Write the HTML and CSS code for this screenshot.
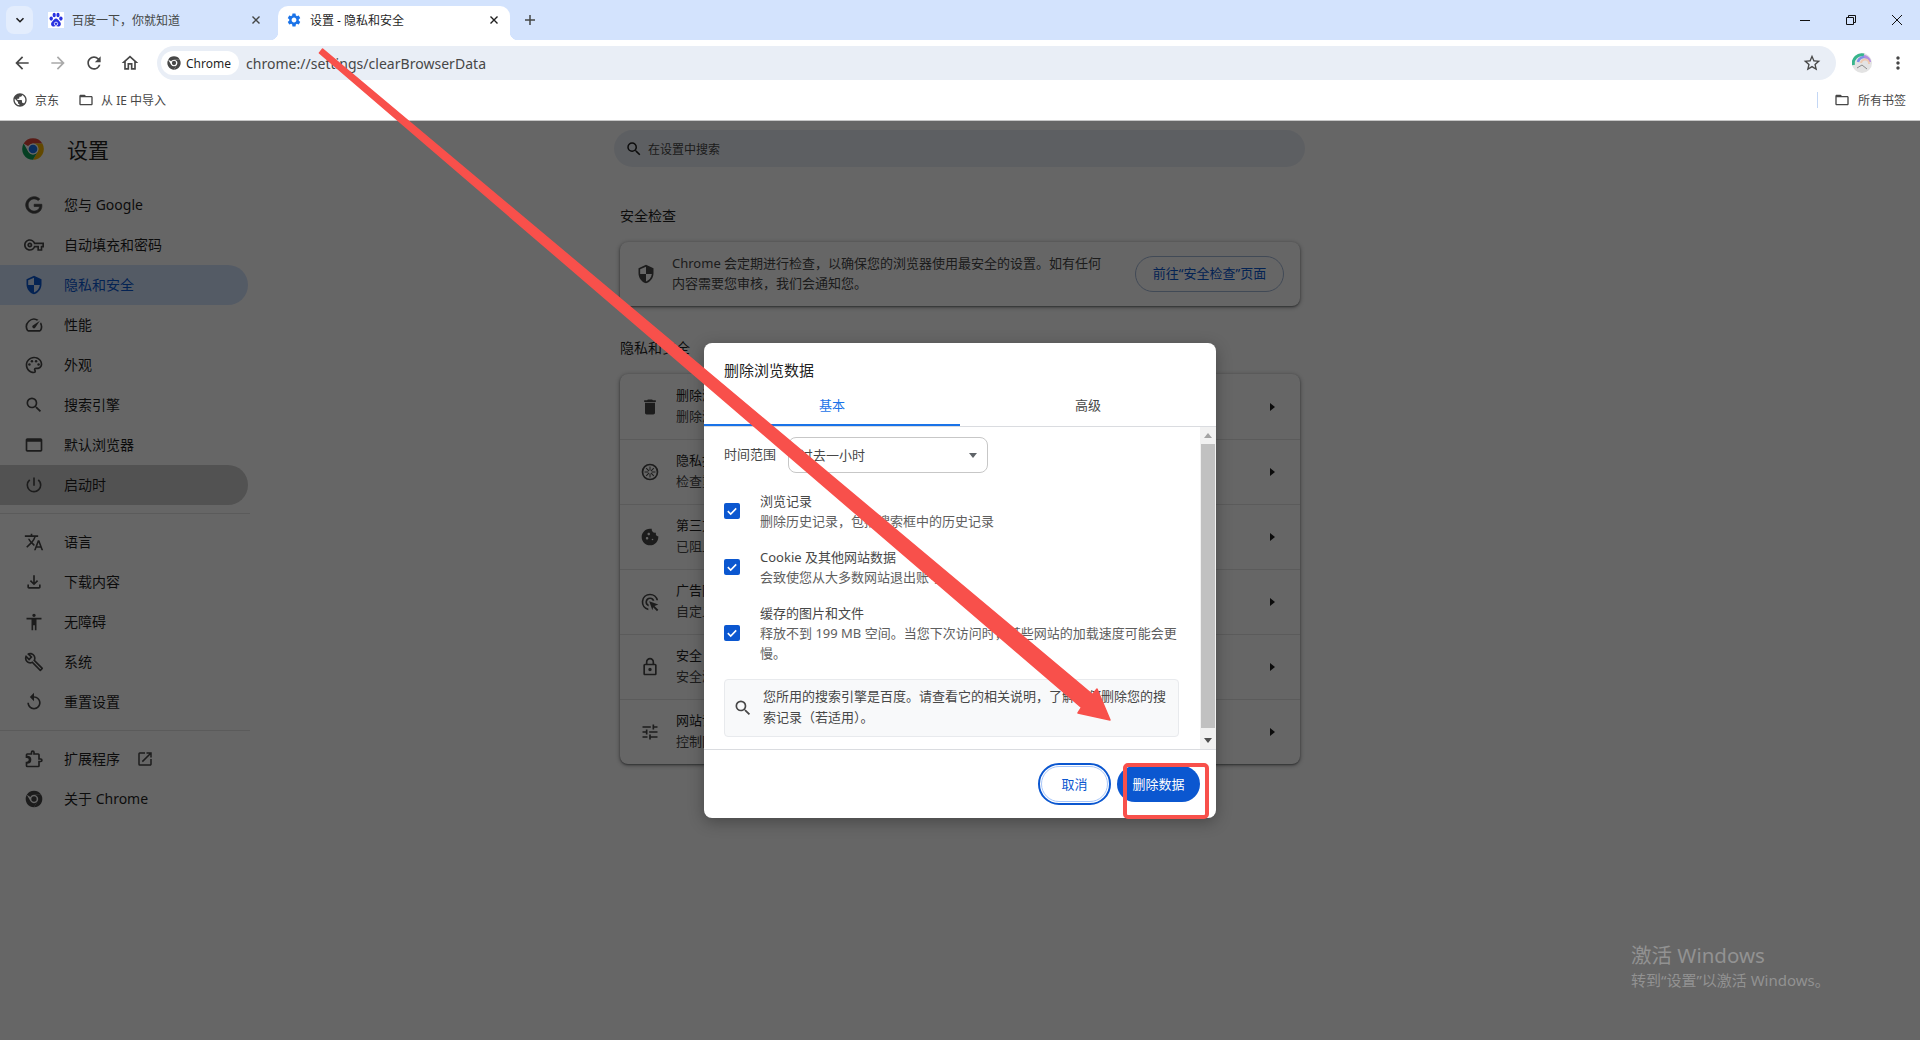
FILE: index.html
```html
<!DOCTYPE html>
<html lang="zh-CN">
<head>
  <meta charset="UTF-8">
  <title>设置 - 隐私和安全</title>
  <link rel="stylesheet" href="styles.css">
</head>
<body>

  <!-- icon set -->
  <svg class="sprite" xmlns="http://www.w3.org/2000/svg">
    <symbol id="i-back" viewBox="0 0 24 24"><path d="M20 11H7.83l5.59-5.59L12 4l-8 8 8 8 1.41-1.41L7.83 13H20v-2z"/></symbol>
    <symbol id="i-forward" viewBox="0 0 24 24"><path d="M12 4l-1.41 1.41L16.17 11H4v2h12.17l-5.58 5.59L12 20l8-8z"/></symbol>
    <symbol id="i-reload" viewBox="0 0 24 24"><path d="M17.65 6.35A7.958 7.958 0 0 0 12 4c-4.42 0-7.99 3.58-7.99 8s3.57 8 7.99 8c3.73 0 6.84-2.55 7.73-6h-2.08A5.99 5.99 0 0 1 12 18c-3.31 0-6-2.69-6-6s2.69-6 6-6c1.66 0 3.14.69 4.22 1.78L13 11h7V4l-2.35 2.35z"/></symbol>
    <symbol id="i-home" viewBox="0 0 24 24"><path d="M12 5.69l5 4.5V18h-2v-6H9v6H7v-7.81l5-4.5M12 3L2 12h3v8h6v-6h2v6h6v-8h3L12 3z"/></symbol>
    <symbol id="i-star" viewBox="0 0 24 24"><path d="M22 9.24l-7.19-.62L12 2 9.19 8.63 2 9.24l5.46 4.73L5.82 21 12 17.27 18.18 21l-1.63-7.03L22 9.24zM12 15.4l-3.76 2.27 1-4.28-3.32-2.88 4.38-.38L12 6.1l1.71 4.04 4.38.38-3.32 2.88 1 4.28L12 15.4z"/></symbol>
    <symbol id="i-more" viewBox="0 0 24 24"><path d="M12 8c1.1 0 2-.9 2-2s-.9-2-2-2-2 .9-2 2 .9 2 2 2zm0 2c-1.1 0-2 .9-2 2s.9 2 2 2 2-.9 2-2-.9-2-2-2zm0 6c-1.1 0-2 .9-2 2s.9 2 2 2 2-.9 2-2-.9-2-2-2z"/></symbol>
    <symbol id="i-folder" viewBox="0 0 24 24"><path d="M20 6h-8l-2-2H4c-1.1 0-1.99.9-1.99 2L2 18c0 1.1.9 2 2 2h16c1.1 0 2-.9 2-2V8c0-1.1-.9-2-2-2zm0 12H4V8h16v10z"/></symbol>
    <symbol id="i-globe" viewBox="0 0 24 24"><path d="M12 2C6.48 2 2 6.48 2 12s4.48 10 10 10 10-4.48 10-10S17.52 2 12 2zm-1 17.93c-3.95-.49-7-3.85-7-7.93 0-.62.08-1.21.21-1.79L9 15v1c0 1.1.9 2 2 2v1.93zm6.9-2.54c-.26-.81-1-1.39-1.9-1.39h-1v-3c0-.55-.45-1-1-1H8v-2h2c.55 0 1-.45 1-1V7h2c1.1 0 2-.9 2-2v-.41c2.93 1.19 5 4.06 5 7.41 0 2.08-.8 3.97-2.1 5.39z"/></symbol>
    <symbol id="i-gear" viewBox="0 0 24 24"><path d="M19.14 12.94c.04-.3.06-.61.06-.94 0-.32-.02-.64-.07-.94l2.03-1.58a.49.49 0 0 0 .12-.61l-1.92-3.32a.488.488 0 0 0-.59-.22l-2.39.96c-.5-.38-1.03-.7-1.62-.94l-.36-2.54a.484.484 0 0 0-.48-.41h-3.84c-.24 0-.43.17-.47.41l-.36 2.54c-.59.24-1.13.57-1.62.94l-2.39-.96c-.22-.08-.47 0-.59.22L2.74 8.87c-.12.21-.08.47.12.61l2.03 1.58c-.05.3-.09.63-.09.94s.02.64.07.94l-2.03 1.58a.49.49 0 0 0-.12.61l1.92 3.32c.12.22.37.29.59.22l2.39-.96c.5.38 1.03.7 1.62.94l.36 2.54c.05.24.24.41.48.41h3.84c.24 0 .44-.17.47-.41l.36-2.54c.59-.24 1.13-.56 1.62-.94l2.39.96c.22.08.47 0 .59-.22l1.92-3.32c.12-.22.07-.47-.12-.61l-2.01-1.58zM12 15.6c-1.98 0-3.6-1.62-3.6-3.6s1.62-3.6 3.6-3.6 3.6 1.62 3.6 3.6-1.62 3.6-3.6 3.6z"/></symbol>
    <symbol id="i-search" viewBox="0 0 24 24"><path d="M15.5 14h-.79l-.28-.27A6.471 6.471 0 0 0 16 9.5 6.5 6.5 0 1 0 9.5 16c1.61 0 3.09-.59 4.23-1.57l.27.28v.79l5 4.99L20.49 19l-4.99-5zm-6 0C7.01 14 5 11.99 5 9.5S7.01 5 9.5 5 14 7.01 14 9.5 11.99 14 9.5 14z"/></symbol>
    <symbol id="i-google" viewBox="0 0 24 24"><path d="M21.35 11.1h-9.17v2.73h6.51c-.33 3.81-3.5 5.44-6.5 5.44C8.36 19.27 5 16.25 5 12c0-4.1 3.2-7.27 7.2-7.27 3.09 0 4.9 1.97 4.9 1.97L19 4.72S16.56 2 12.1 2C6.42 2 2.03 6.8 2.03 12c0 5.05 4.13 10 10.22 10 5.35 0 9.25-3.67 9.25-9.09 0-1.15-.15-1.81-.15-1.81z" stroke="currentColor" stroke-width=".8"/></symbol>
    <symbol id="i-key" viewBox="0 0 24 24"><path d="M22 19h-6v-4h-2.68c-1.14 2.42-3.6 4-6.32 4-3.86 0-7-3.14-7-7s3.14-7 7-7c2.72 0 5.17 1.58 6.32 4H24v6h-2v4zm-4-2h2v-4h2v-2H11.94l-.23-.67C11.01 8.34 9.11 7 7 7c-2.76 0-5 2.24-5 5s2.24 5 5 5c2.11 0 4.01-1.34 4.71-3.33l.23-.67H18v4zM7 15c-1.65 0-3-1.35-3-3s1.35-3 3-3 3 1.35 3 3-1.35 3-3 3zm0-4c-.55 0-1 .45-1 1s.45 1 1 1 1-.45 1-1-.45-1-1-1z"/></symbol>
    <symbol id="i-shield" viewBox="0 0 24 24"><path d="M12 1L3 5v6c0 5.55 3.84 10.74 9 12 5.16-1.26 9-6.45 9-12V5l-9-4zm0 11h7c-.53 4.12-3.28 7.79-7 8.94V12H5V6.3l7-3.11V12z"/></symbol>
    <symbol id="i-speed" viewBox="0 0 24 24"><path d="M20.38 8.57l-1.23 1.85a8 8 0 0 1-.22 7.58H5.07A8 8 0 0 1 15.58 6.85l1.85-1.23A10 10 0 0 0 3.35 19a2 2 0 0 0 1.72 1h13.85a2 2 0 0 0 1.74-1 10 10 0 0 0-.27-10.44zm-9.79 6.84a2 2 0 0 0 2.83 0l5.66-8.49-8.49 5.66a2 2 0 0 0 0 2.83z"/></symbol>
    <symbol id="i-palette" viewBox="0 0 24 24"><path d="M12 22C6.49 22 2 17.51 2 12S6.49 2 12 2s10 4.04 10 9c0 3.31-2.69 6-6 6h-1.77c-.28 0-.5.22-.5.5 0 .12.05.23.13.33.41.47.64 1.06.64 1.67A2.5 2.5 0 0 1 12 22zm0-18c-4.41 0-8 3.59-8 8s3.59 8 8 8c.28 0 .5-.22.5-.5a.54.54 0 0 0-.14-.35c-.41-.46-.63-1.05-.63-1.65a2.5 2.5 0 0 1 2.5-2.5H16c2.21 0 4-1.79 4-4 0-3.86-3.59-7-8-7z"/><circle cx="6.5" cy="11.5" r="1.5"/><circle cx="9.5" cy="7.5" r="1.5"/><circle cx="14.5" cy="7.5" r="1.5"/><circle cx="17.5" cy="11.5" r="1.5"/></symbol>
    <symbol id="i-window" viewBox="0 0 24 24"><path d="M20 4H4c-1.1 0-2 .9-2 2v12c0 1.1.9 2 2 2h16c1.1 0 2-.9 2-2V6c0-1.1-.9-2-2-2zm0 14H4V8h16v10z"/></symbol>
    <symbol id="i-power" viewBox="0 0 24 24"><path d="M13 3h-2v10h2V3zm4.83 2.17l-1.42 1.42A6.92 6.92 0 0 1 19 12c0 3.87-3.13 7-7 7A6.995 6.995 0 0 1 7.58 6.58L6.17 5.17A8.932 8.932 0 0 0 3 12a9 9 0 0 0 18 0c0-2.74-1.23-5.18-3.17-6.83z"/></symbol>
    <symbol id="i-translate" viewBox="0 0 24 24"><path d="M12.87 15.07l-2.54-2.51.03-.03A17.52 17.52 0 0 0 14.07 6H17V4h-7V2H8v2H1v1.99h11.17C11.5 7.92 10.44 9.75 9 11.35 8.07 10.32 7.3 9.19 6.69 8h-2c.73 1.63 1.73 3.17 2.98 4.56l-5.09 5.02L4 19l5-5 3.11 3.11.76-2.04zM18.5 10h-2L12 22h2l1.12-3h4.75L21 22h2l-4.5-12zm-2.62 7l1.62-4.33L19.12 17h-3.24z"/></symbol>
    <symbol id="i-download" viewBox="0 0 24 24"><path d="M18 15v3H6v-3H4v3c0 1.1.9 2 2 2h12c1.1 0 2-.9 2-2v-3h-2zm-1-4l-1.41-1.41L13 12.17V4h-2v8.17L8.41 9.59 7 11l5 5 5-5z"/></symbol>
    <symbol id="i-access" viewBox="0 0 24 24"><path d="M12 2c1.1 0 2 .9 2 2s-.9 2-2 2-2-.9-2-2 .9-2 2-2zm9 7h-6v13h-2v-6h-2v6H9V9H3V7h18v2z"/></symbol>
    <symbol id="i-wrench" viewBox="0 0 24 24"><path d="M22.61 18.99l-9.08-9.08c.93-2.34.45-5.1-1.44-7C9.79.61 6.21.4 3.66 2.26L7.5 6.11 6.08 7.52 2.25 3.69C.39 6.23.6 9.82 2.9 12.11c1.86 1.86 4.57 2.35 6.89 1.48l9.11 9.11c.39.39 1.02.39 1.41 0l2.3-2.3c.4-.38.4-1.01 0-1.41zm-3 1.6l-9.46-9.46c-.61.45-1.29.72-2 .82-1.36.2-2.79-.21-3.83-1.25C3.37 9.76 2.93 8.5 3 7.26l3.09 3.09 4.24-4.24-3.09-3.09c1.24-.07 2.49.37 3.44 1.31a4.469 4.469 0 0 1 1.24 3.96 4.35 4.35 0 0 1-.88 1.96l9.45 9.45-.88.89z"/></symbol>
    <symbol id="i-reset" viewBox="0 0 24 24"><path d="M12 5V1L7 6l5 5V7c3.31 0 6 2.69 6 6s-2.69 6-6 6-6-2.69-6-6H4c0 4.42 3.58 8 8 8s8-3.58 8-8-3.58-8-8-8z"/></symbol>
    <symbol id="i-ext" viewBox="0 0 24 24"><path d="M20 11h-1V7a2 2 0 0 0-2-2h-4V4a2.500 2.500 0 0 0-5 0v1H4a2 2 0 0 0-2 2v3.800h1.500a2.200 2.200 0 0 1 0 4.400H2V20a2 2 0 0 0 2 2h13a2 2 0 0 0 2-2v-4h1a2.500 2.500 0 0 0 0-5zm-3 3v6H4v-2.200a4.200 4.200 0 0 0 0-9.600V7h6V4a.5.5 0 0 1 1 0v3h6v6h3a.5.5 0 0 1 0 1z"/></symbol>
    <symbol id="i-open" viewBox="0 0 24 24"><path d="M19 19H5V5h7V3H5a2 2 0 0 0-2 2v14a2 2 0 0 0 2 2h14c1.1 0 2-.9 2-2v-7h-2v7zM14 3v2h3.59l-9.83 9.83 1.41 1.41L19 6.41V10h2V3h-7z"/></symbol>
    <symbol id="i-chrome-mono" viewBox="0 0 24 24"><path d="M12 2a10 10 0 0 1 8.66 5H12a5 5 0 0 0-4.33 2.5L3.34 7A10 10 0 0 1 12 2z"/><path d="M20.66 7A10 10 0 0 1 12 22l4.33-7.5A5 5 0 0 0 12 7z"/><path d="M12 22A10 10 0 0 1 3.34 7l4.33 7.5a5 5 0 0 0 8.66 0z"/><circle cx="12" cy="12" r="3.2"/></symbol>
    <symbol id="i-trash" viewBox="0 0 24 24"><path d="M6 19c0 1.1.9 2 2 2h8c1.1 0 2-.9 2-2V7H6v12zM19 4h-3.5l-1-1h-5l-1 1H5v2h14V4z"/></symbol>
    <symbol id="i-guide" viewBox="0 0 24 24"><path d="M12 2a10 10 0 1 0 0 20 10 10 0 0 0 0-20zm0 18a8 8 0 1 1 0-16 8 8 0 0 1 0 16z"/><path d="M11.4 5.5h1.2v4.6h-1.2zM11.4 13.9h1.2v4.6h-1.2zM5.5 11.4h4.6v1.2H5.5zM13.9 11.4h4.6v1.2h-4.6zM7 7.9l.9-.9 3.2 3.2-.9.9zM12.9 13.8l.9-.9 3.2 3.2-.9.9zM7.9 17l-.9-.9 3.2-3.2.9.9zM13.8 11.1l-.9-.9 3.2-3.2.9.9z"/></symbol>
    <symbol id="i-cookie" viewBox="0 0 24 24"><path d="M21.95 10.99c-1.79-.03-3.7-1.95-2.68-4.22-2.98 1-5.77-1.59-5.19-4.56C6.95.71 2 6.58 2 12c0 5.52 4.48 10 10 10 5.89 0 10.54-5.08 9.95-11.01zM8.5 15c-.83 0-1.5-.67-1.5-1.5S7.67 12 8.5 12s1.5.67 1.5 1.5S9.33 15 8.5 15zm2-5C9.67 10 9 9.33 9 8.5S9.67 7 10.5 7s1.5.67 1.5 1.5-.67 1.5-1.5 1.5zm4.5 6c-.55 0-1-.45-1-1s.45-1 1-1 1 .45 1 1-.45 1-1 1z"/></symbol>
    <symbol id="i-ads" viewBox="0 0 24 24"><path d="M12 2a10 10 0 0 0-2 19.8v-2.05A8 8 0 1 1 19.75 10h2.05A10 10 0 0 0 12 2z"/><path d="M12 6.5a5.5 5.5 0 0 0-1.6 10.76v-2.16A3.5 3.5 0 1 1 15.1 10.4h2.16A5.5 5.5 0 0 0 12 6.5z"/><path d="M11 11l11 4-4.6 1.8L22 21.4 20.4 23l-4.6-4.6L14.9 22z"/></symbol>
    <symbol id="i-lock" viewBox="0 0 24 24"><path d="M18 8h-1V6c0-2.76-2.24-5-5-5S7 3.24 7 6v2H6c-1.1 0-2 .9-2 2v10c0 1.1.9 2 2 2h12c1.1 0 2-.9 2-2V10c0-1.1-.9-2-2-2zM9 6c0-1.66 1.34-3 3-3s3 1.34 3 3v2H9V6zm9 14H6V10h12v10zm-6-3c1.1 0 2-.9 2-2s-.9-2-2-2-2 .9-2 2 .9 2 2 2z"/></symbol>
    <symbol id="i-tune" viewBox="0 0 24 24"><path d="M3 17v2h6v-2H3zM3 5v2h10V5H3zm10 16v-2h8v-2h-8v-2h-2v6h2zM7 9v2H3v2h4v2h2V9H7zm14 4v-2H11v2h10zm-6-4h2V7h4V5h-4V3h-2v6z"/></symbol>
    <symbol id="i-chrome" viewBox="0 0 24 24"><path fill="#db4437" d="M12 2a10 10 0 0 1 8.66 5H12a5 5 0 0 0-4.33 2.5L3.34 7A10 10 0 0 1 12 2z"/><path fill="#f4b400" d="M20.66 7A10 10 0 0 1 12 22l4.33-7.5A5 5 0 0 0 12 7z"/><path fill="#0f9d58" d="M12 22A10 10 0 0 1 3.34 7l4.33 7.5a5 5 0 0 0 8.66 0z"/><circle cx="12" cy="12" r="5" fill="#fff"/><circle cx="12" cy="12" r="4" fill="#1a73e8"/></symbol>
  </svg>

  <!-- tab strip -->
  <div class="tabstrip">
    <button class="tab-search"><svg viewBox="0 0 12 12" width="12" height="12"><path d="M2.5 4.2 6 7.7l3.5-3.5" fill="none" stroke="#1f1f1f" stroke-width="1.6"/></svg></button>
    <div class="tab">
      <svg class="fav" viewBox="0 0 16 16"><rect width="16" height="16" fill="#fff"/><g fill="#2932e1"><ellipse cx="3.2" cy="6.6" rx="1.7" ry="2.1"/><ellipse cx="6.2" cy="3" rx="1.6" ry="2.2"/><ellipse cx="10" cy="3" rx="1.6" ry="2.2"/><ellipse cx="12.9" cy="6.6" rx="1.7" ry="2.1"/><path d="M8 6.6c1.6 0 2.3 1.6 3.4 2.6 1.3 1.2 1.6 2.1 1.4 3.3-.3 1.6-1.6 2.2-3 2-1-.2-1.200-.4-1.800-.4s-.9.3-1.900.4c-1.400.2-2.700-.4-3-2-.2-1.200.2-2.100 1.500-3.300C5.700 8.200 6.400 6.600 8 6.600z"/></g><circle cx="8" cy="11.800" r="1.700" fill="none" stroke="#fff" stroke-width=".8"/></svg>
      <span class="tab-title">百度一下，你就知道</span>
      <svg class="tab-close" viewBox="0 0 10 10"><path d="M1.500 1.500l7 7m0-7l-7 7" stroke="#444746" stroke-width="1.400"/></svg>
    </div>
    <div class="tab tab-active">
      <svg class="fav gear"><use href="#i-gear"/></svg>
      <span class="tab-title">设置 - 隐私和安全</span>
      <svg class="tab-close" viewBox="0 0 10 10"><path d="M1.500 1.500l7 7m0-7l-7 7" stroke="#1f1f1f" stroke-width="1.400"/></svg>
    </div>
    <svg class="tab-new" viewBox="0 0 12 12"><path d="M6 1v10M1 6h10" stroke="#444746" stroke-width="1.500"/></svg>
    <div class="win-controls">
      <svg viewBox="0 0 12 12"><path d="M1 6.500h10" stroke="#111" stroke-width="1"/></svg>
      <svg viewBox="0 0 12 12"><path d="M1.500 3.500h7v7h-7zM3.500 3.500v-2h7v7h-2" fill="none" stroke="#111" stroke-width="1"/></svg>
      <svg viewBox="0 0 12 12"><path d="M1 1l10 10m0-10L1 11" stroke="#111" stroke-width="1"/></svg>
    </div>
  </div>

  <!-- toolbar -->
  <div class="toolbar">
    <svg class="tool"><use href="#i-back"/></svg>
    <svg class="tool tool-off"><use href="#i-forward"/></svg>
    <svg class="tool"><use href="#i-reload"/></svg>
    <svg class="tool"><use href="#i-home"/></svg>
    <div class="omnibox">
      <span class="chip"><svg class="chip-icon"><use href="#i-chrome-mono"/></svg>Chrome</span>
      <span class="url">chrome://settings/clearBrowserData</span>
      <svg class="tool star"><use href="#i-star"/></svg>
    </div>
    <svg class="avatar" viewBox="0 0 20 20">
      <circle cx="10" cy="10" r="10" fill="#e3e3e3"/>
      <path d="M1.500 12A8.500 8.500 0 0 1 12 2" fill="none" stroke="#37b58c" stroke-width="3"/>
      <path d="M6 9a6 6 0 0 1 9-4" fill="none" stroke="#7f8fe8" stroke-width="2.500"/>
      <path d="M12 3a8 8 0 0 1 6 6" fill="none" stroke="#b48ee0" stroke-width="2.500"/>
      <path d="M9 10a4 4 0 0 1 8 1" fill="none" stroke="#efc9b0" stroke-width="2"/>
      <path d="M5 15l5-3 5 4" fill="none" stroke="#8d8d8d" stroke-width="1"/>
    </svg>
    <svg class="tool kebab"><use href="#i-more"/></svg>
  </div>

  <!-- bookmarks bar -->
  <div class="bookmarks">
    <span class="bm"><svg class="bm-icon"><use href="#i-globe"/></svg>京东</span>
    <span class="bm"><svg class="bm-icon"><use href="#i-folder"/></svg>从 IE 中导入</span>
    <span class="bm-sep"></span>
    <span class="bm"><svg class="bm-icon"><use href="#i-folder"/></svg>所有书签</span>
  </div>

  <!-- settings page -->
  <div class="page">
    <div class="sidebar">
      <div class="side-head">
        <svg class="side-logo"><use href="#i-chrome"/></svg>
        <span>设置</span>
      </div>
      <div class="nav-item"><svg><use href="#i-google"/></svg>您与 Google</div>
      <div class="nav-item"><svg><use href="#i-key"/></svg>自动填充和密码</div>
      <div class="nav-item nav-active"><svg><use href="#i-shield"/></svg>隐私和安全</div>
      <div class="nav-item"><svg><use href="#i-speed"/></svg>性能</div>
      <div class="nav-item"><svg><use href="#i-palette"/></svg>外观</div>
      <div class="nav-item"><svg><use href="#i-search"/></svg>搜索引擎</div>
      <div class="nav-item"><svg><use href="#i-window"/></svg>默认浏览器</div>
      <div class="nav-item nav-hover"><svg><use href="#i-power"/></svg>启动时</div>
      <div class="nav-sep"></div>
      <div class="nav-item"><svg><use href="#i-translate"/></svg>语言</div>
      <div class="nav-item"><svg><use href="#i-download"/></svg>下载内容</div>
      <div class="nav-item"><svg><use href="#i-access"/></svg>无障碍</div>
      <div class="nav-item"><svg><use href="#i-wrench"/></svg>系统</div>
      <div class="nav-item"><svg><use href="#i-reset"/></svg>重置设置</div>
      <div class="nav-sep"></div>
      <div class="nav-item"><svg><use href="#i-ext"/></svg>扩展程序<svg class="nav-open"><use href="#i-open"/></svg></div>
      <div class="nav-item"><svg><use href="#i-chrome-mono"/></svg>关于 Chrome</div>
    </div>

    <div class="main">
      <div class="searchbox"><svg><use href="#i-search"/></svg>在设置中搜索</div>
      <h2 class="sec-title">安全检查</h2>
      <div class="card check-card">
        <svg class="row-icon"><use href="#i-shield"/></svg>
        <p class="check-text">Chrome 会定期进行检查，以确保您的浏览器使用最安全的设置。如有任何内容需要您审核，我们会通知您。</p>
        <span class="check-btn">前往“安全检查”页面</span>
      </div>
      <h2 class="sec-title sec-second">隐私和安全</h2>
      <div class="card">
        <div class="row"><svg class="row-icon"><use href="#i-trash"/></svg><div class="row-text"><div>删除浏览数据</div><div>删除浏览记录、Cookie、缓存及其他数据</div></div><span class="row-arrow"></span></div>
        <div class="row"><svg class="row-icon"><use href="#i-guide"/></svg><div class="row-text"><div>隐私指南</div><div>检查重要的隐私和安全控制措施</div></div><span class="row-arrow"></span></div>
        <div class="row"><svg class="row-icon"><use href="#i-cookie"/></svg><div class="row-text"><div>第三方 Cookie</div><div>已阻止无痕模式下的第三方 Cookie</div></div><span class="row-arrow"></span></div>
        <div class="row"><svg class="row-icon"><use href="#i-ads"/></svg><div class="row-text"><div>广告隐私设置</div><div>自定义网站用于向您展示广告的信息</div></div><span class="row-arrow"></span></div>
        <div class="row"><svg class="row-icon"><use href="#i-lock"/></svg><div class="row-text"><div>安全</div><div>安全浏览（防范危险网站）和其他安全设置</div></div><span class="row-arrow"></span></div>
        <div class="row"><svg class="row-icon"><use href="#i-tune"/></svg><div class="row-text"><div>网站设置</div><div>控制网站可以使用和显示什么信息</div></div><span class="row-arrow"></span></div>
      </div>
    </div>

    <!-- dialog over dimmed page -->
    <div class="scrim">
      <div class="dialog">
        <div class="dlg-title">删除浏览数据</div>
        <div class="dlg-tabs">
          <div class="dlg-tab dlg-tab-on">基本</div>
          <div class="dlg-tab">高级</div>
        </div>
        <div class="dlg-body">
          <div class="dlg-scroll">
            <div class="range">
              <span class="range-label">时间范围</span>
              <div class="select">过去一小时<span class="caret"></span></div>
            </div>
            <div class="opt opt-first"><span class="check"><svg viewBox="0 0 16 16"><path d="M3.800 8.200l2.900 2.800 5.500-5.600" fill="none" stroke="#fff" stroke-width="1.600"/></svg></span><div><div class="opt-label">浏览记录</div><div class="opt-sub">删除历史记录，包括搜索框中的历史记录</div></div></div>
            <div class="opt"><span class="check"><svg viewBox="0 0 16 16"><path d="M3.800 8.200l2.900 2.800 5.500-5.600" fill="none" stroke="#fff" stroke-width="1.600"/></svg></span><div><div class="opt-label">Cookie 及其他网站数据</div><div class="opt-sub">会致使您从大多数网站退出账号。</div></div></div>
            <div class="opt"><span class="check"><svg viewBox="0 0 16 16"><path d="M3.800 8.200l2.900 2.800 5.500-5.600" fill="none" stroke="#fff" stroke-width="1.600"/></svg></span><div><div class="opt-label">缓存的图片和文件</div><div class="opt-sub">释放不到 199 MB 空间。当您下次访问时，某些网站的加载速度可能会更慢。</div></div></div>
            <div class="notice"><svg><use href="#i-search"/></svg><p>您所用的搜索引擎是百度。请查看它的相关说明，了解如何删除您的搜索记录（若适用）。</p></div>
          </div>
          <div class="scrollbar">
            <span class="sb-up"></span>
            <span class="sb-thumb"></span>
            <span class="sb-down"></span>
          </div>
        </div>
        <div class="dlg-foot">
          <button class="btn btn-cancel">取消</button>
          <button class="btn btn-delete">删除数据</button>
        </div>
      </div>
    </div>
  </div>

  <!-- windows watermark -->
  <div class="watermark">
    <div class="wm-big">激活 Windows</div>
    <div>转到“设置”以激活 Windows。</div>
  </div>

  <!-- red annotation drawn on top of the screenshot -->
  <svg class="annot" viewBox="0 0 1920 1040">
    <polygon points="322.600,49.100 1092.500,694.500 1097,689 1110,720 1078,713 1081.500,707.500 319.400,52.900" fill="#f8504b" stroke="#f8504b" stroke-width="1.500" stroke-linejoin="round"/>
    <rect x="1125" y="765" width="82" height="52" rx="3" fill="none" stroke="#f8504b" stroke-width="4"/>
  </svg>

</body>
</html>
```

FILE: styles.css
```css
* {
  box-sizing: border-box;
}
html, body {
  height: 100%;
}
body {
  margin: 0;
  position: relative;
  display: flex;
  flex-direction: column;
  height: 1040px;
  overflow: hidden;
  background: #fff;
  color: #1f1f1f;
  font-family: "Noto Sans", "Noto Sans CJK SC", sans-serif;
  font-size: 13px;
}
svg {
  fill: currentColor;
  flex: none;
}
.sprite {
  display: none;
}

/* tab strip */
.tabstrip {
  display: flex;
  align-items: flex-end;
  height: 40px;
  flex: none;
  background: #d3e3fd;
  padding-left: 6px;
}
.tab-search {
  align-self: flex-start;
  margin: 6px 7px 0 0;
  width: 27px;
  height: 28px;
  padding: 0;
  border: 0;
  border-radius: 8px;
  background: #e3edfd;
  display: flex;
  align-items: center;
  justify-content: center;
}
.tab {
  position: relative;
  display: flex;
  align-items: center;
  width: 232px;
  height: 34px;
  padding: 0 11px 7px 8px;
  margin-right: 6px;
  font-size: 12px;
  color: #444746;
}
.tab-active {
  background: #fff;
  border-radius: 10px 10px 0 0;
  color: #1f1f1f;
}
.tab-active::before, .tab-active::after {
  content: "";
  position: absolute;
  bottom: 0;
  width: 8px;
  height: 8px;
}
.tab-active::before {
  left: -8px;
  background: radial-gradient(circle at 0 0, transparent 8px, #fff 8.500px);
}
.tab-active::after {
  right: -8px;
  background: radial-gradient(circle at 100% 0, transparent 8px, #fff 8.500px);
}
.fav {
  width: 16px;
  height: 16px;
  margin-right: 8px;
}
.gear {
  color: #1a73e8;
}
.tab-title {
  flex: 1;
  white-space: nowrap;
}
.tab-close {
  width: 10px;
  height: 10px;
}
.tab-new {
  width: 12px;
  height: 12px;
  margin: 0 0 14px 8px;
}
.win-controls {
  margin-left: auto;
  align-self: flex-start;
  display: flex;
  gap: 34px;
  padding: 14px 17px 0 0;
}
.win-controls svg {
  width: 12px;
  height: 12px;
}

/* toolbar */
.toolbar {
  display: flex;
  align-items: center;
  height: 40px;
  flex: none;
  background: #fff;
  border-radius: 8px 8px 0 0;
  padding: 6px 0 0 12px;
  gap: 16px;
}
.tool {
  width: 20px;
  height: 20px;
  color: #474747;
}
.tool-off {
  color: #a9a9a9;
}
.omnibox {
  display: flex;
  align-items: center;
  height: 34px;
  width: 1679px;
  margin-left: 1px;
  padding: 0 14px 0 4px;
  background: #e9eef6;
  border-radius: 17px;
}
.chip {
  display: flex;
  align-items: center;
  height: 24px;
  padding: 0 8px 0 5px;
  background: #fff;
  border-radius: 12px;
  font-size: 12px;
  color: #1f1f1f;
}
.chip-icon {
  width: 16px;
  height: 16px;
  margin-right: 4px;
  color: #474747;
}
.url {
  flex: 1;
  margin-left: 7px;
  font-size: 14px;
  letter-spacing: .03px;
  color: #474747;
}
.avatar {
  width: 20px;
  height: 20px;
}

/* bookmarks */
.bookmarks {
  display: flex;
  align-items: center;
  height: 41px;
  flex: none;
  padding: 0 14px 1px 12px;
  background: #fff;
  border-bottom: 1px solid #c7c7c7;
  font-size: 12px;
  color: #474747;
}
.bm {
  display: flex;
  align-items: center;
  margin-right: 19px;
}
.bm:last-child {
  margin-right: 0;
}
.bm-icon {
  width: 16px;
  height: 16px;
  margin-right: 7px;
}
.bm:last-child .bm-icon {
  margin-right: 8px;
}
.bm-sep {
  width: 1px;
  height: 16px;
  margin: 0 16px 0 auto;
  background: #c4d7f5;
}

/* settings page */
.page {
  position: relative;
  flex: 1;
  display: flex;
  min-height: 0;
}
.sidebar {
  width: 250px;
  flex: none;
}
.side-head {
  display: flex;
  align-items: center;
  height: 64px;
  padding: 0 0 8px 20px;
  font-size: 21px;
}
.side-logo {
  width: 26px;
  height: 26px;
  margin-right: 21px;
}
.nav-item {
  display: flex;
  align-items: center;
  width: 248px;
  height: 40px;
  padding: 0 0 2px 24px;
  border-radius: 0 20px 20px 0;
  font-size: 14px;
}
.nav-item svg {
  width: 20px;
  height: 20px;
  margin: 2px 20px 0 0;
  color: #474747;
}
.nav-item svg.nav-open {
  width: 18px;
  height: 18px;
  margin: 2px 0 0 16px;
}
.nav-active {
  background: #d3e3fd;
  color: #0b57d0;
}
.nav-active svg {
  color: #0b57d0;
}
.nav-hover {
  background: #cdcdcd;
}
.nav-sep {
  height: 1px;
  margin: 8px 0;
  background: #e3e3e3;
}
.main {
  width: 691px;
  margin-left: 364px;
  padding-top: 9px;
}
.searchbox {
  display: flex;
  align-items: center;
  height: 37px;
  padding-left: 11px;
  border-radius: 19px;
  background: #e9eef6;
  font-size: 12px;
  color: #474747;
}
.searchbox svg {
  width: 18px;
  height: 18px;
  margin-right: 5px;
  color: #1f1f1f;
}
.sec-title {
  margin: 39px 0 16px 6px;
  font-size: 14px;
  line-height: 20px;
  font-weight: 400;
}
.sec-second {
  margin: 32px 0 16px 6px;
}
.card {
  width: 680px;
  margin-left: 6px;
  border-radius: 8px;
  background: #fff;
  box-shadow: 0 1px 2px rgba(60, 64, 67, .6), 0 1px 4px 1px rgba(60, 64, 67, .3);
}
.check-card {
  display: flex;
  align-items: center;
  height: 64px;
  padding: 0 16px 0 16px;
}
.row-icon {
  width: 20px;
  height: 20px;
  color: #474747;
}
.check-text {
  width: 430px;
  margin: 0 0 2px 16px;
  font-size: 13px;
  line-height: 20px;
  color: #474747;
}
.check-btn {
  margin-left: auto;
  width: 149px;
  height: 36px;
  line-height: 33px;
  text-align: center;
  border: 1px solid #a3b8d8;
  border-radius: 18px;
  font-size: 13px;
  color: #0b57d0;
  white-space: nowrap;
}
.row {
  display: flex;
  align-items: center;
  height: 65px;
  padding: 0 25px 0 20px;
  border-top: 1px solid #e3e3e3;
  font-size: 13px;
  line-height: 21px;
}
.row:first-child {
  border-top: 0;
}
.row-text {
  flex: 1;
  margin: 0 0 2px 16px;
  color: #474747;
}
.row-text div:first-child {
  color: #1f1f1f;
}
.row-arrow {
  width: 0;
  height: 0;
  border-left: 5px solid #1f1f1f;
  border-top: 4px solid transparent;
  border-bottom: 4px solid transparent;
}

/* dialog */
.scrim {
  position: absolute;
  inset: 0;
  display: flex;
  align-items: center;
  justify-content: center;
  background: rgba(0, 0, 0, .6);
}
.dialog {
  display: flex;
  flex-direction: column;
  width: 512px;
  height: 475px;
  border-radius: 8px;
  background: #fff;
  box-shadow: 0 4px 16px rgba(0, 0, 0, .3);
}
.dlg-title {
  padding: 17px 20px 0;
  font-size: 15px;
  line-height: 20px;
  color: #1f1f1f;
}
.dlg-tabs {
  display: grid;
  grid-template-columns: 1fr 1fr;
  height: 47px;
  border-bottom: 1px solid #dadce0;
}
.dlg-tab {
  height: 46px;
  padding-top: 15px;
  text-align: center;
  line-height: 20px;
  color: #474747;
}
.dlg-tab-on {
  color: #1a73e8;
  border-bottom: 2px solid #1a73e8;
}
.dlg-body {
  flex: 1;
  display: flex;
  min-height: 0;
  border-bottom: 1px solid #dadce0;
}
.dlg-scroll {
  flex: 1;
  padding: 10px 21px 0 20px;
}
.range {
  display: flex;
  align-items: center;
  gap: 12px;
  color: #474747;
}
.range-label {
  padding-bottom: 3px;
}
.select {
  position: relative;
  width: 200px;
  height: 36px;
  padding: 0 0 0 11px;
  line-height: 35px;
  border: 1px solid #c7c7c7;
  border-radius: 8px;
}
.caret {
  position: absolute;
  right: 10px;
  top: 15px;
  border-top: 5px solid #5f6368;
  border-left: 4px solid transparent;
  border-right: 4px solid transparent;
}
.opt {
  display: flex;
  align-items: center;
  gap: 20px;
  margin-top: 16px;
  line-height: 20px;
}
.opt-first {
  margin-top: 18px;
}
.opt > div {
  flex: 1;
}
.check {
  flex: none;
  width: 16px;
  height: 16px;
  border-radius: 2px;
  background: #0b57d0;
  display: flex;
}
.opt-label {
  color: #474747;
}
.opt-sub {
  color: #5e5e5e;
}
.notice {
  display: flex;
  align-items: center;
  height: 58px;
  margin-top: 16px;
  padding: 0 8px 0 8px;
  border: 1px solid #e8eaed;
  border-radius: 4px;
  background: #f8f9fa;
  color: #474747;
}
.notice svg {
  width: 20px;
  height: 20px;
  margin-right: 10px;
  color: #474747;
}
.notice p {
  margin: 0 0 2px;
  line-height: 21px;
}
.scrollbar {
  display: flex;
  flex-direction: column;
  width: 16px;
  flex: none;
  background: #f1f1f1;
}
.sb-up, .sb-down {
  flex: none;
  height: 17px;
  position: relative;
}
.sb-up::after, .sb-down::after {
  content: "";
  position: absolute;
  left: 4px;
  border-left: 4px solid transparent;
  border-right: 4px solid transparent;
}
.sb-up::after {
  top: 6px;
  border-bottom: 5px solid #a3a3a3;
}
.sb-down::after {
  top: 6px;
  border-top: 5px solid #505050;
}
.sb-thumb {
  flex: 1;
  margin: 0 1px 4px;
  background: #c1c1c1;
}
.dlg-foot {
  display: flex;
  justify-content: flex-end;
  align-items: center;
  gap: 9px;
  height: 68px;
  padding-right: 16px;
}
.btn {
  height: 36px;
  padding: 0 0 2px;
  border-radius: 18px;
  font-family: inherit;
  font-size: 13px;
}
.btn-cancel {
  width: 67px;
  border: 1px solid #a8c7fa;
  background: #fff;
  color: #0b57d0;
  outline: 2px solid #0b57d0;
  outline-offset: 1px;
}
.btn-delete {
  width: 83px;
  border: 0;
  background: #0b57d0;
  color: #fff;
}

/* things lying over the whole screenshot */
.watermark {
  position: absolute;
  left: 1631px;
  top: 941px;
  font-size: 15px;
  line-height: 20px;
  color: #929292;
}
.wm-big {
  font-size: 20.500px;
  line-height: 29px;
}
.annot {
  position: absolute;
  left: 0;
  top: 0;
  width: 1920px;
  height: 1040px;
  pointer-events: none;
}
```
